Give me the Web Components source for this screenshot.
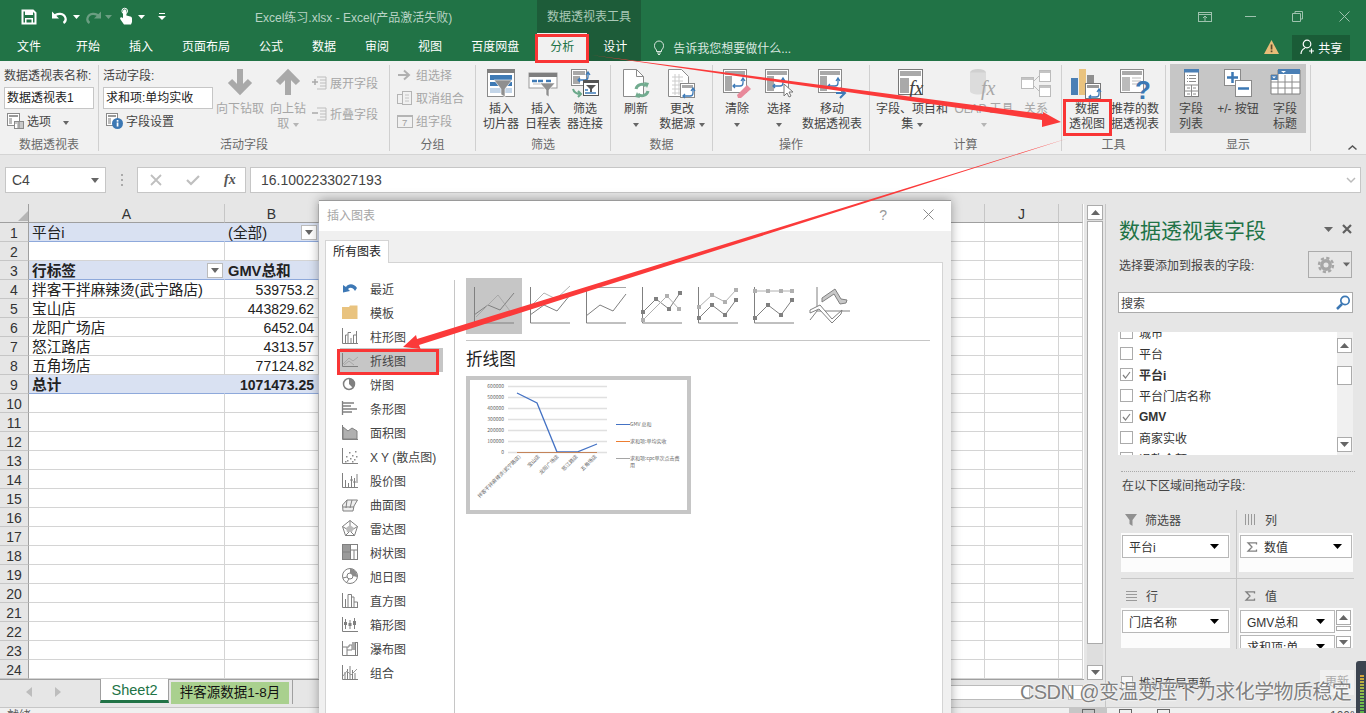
<!DOCTYPE html>
<html lang="zh"><head><meta charset="utf-8"><title>Excel</title>
<style>
html,body{margin:0;padding:0;background:#e6e6e6}
body{font:12px "Liberation Sans","Noto Sans CJK SC",sans-serif;color:#444;width:1366px;height:713px;overflow:hidden}
</style></head><body>
<x-app>
  <x-titlebar></x-titlebar>
  <x-ribbon>
    <x-group w="99" pad="4" label="数据透视表">
      <x-col style="width:94px">
        <x-small>数据透视表名称:</x-small>
        <x-input w="90">数据透视表1</x-input>
        <x-small ico="opts" style="padding-left:3px">选项<x-caret style="margin-left:12px"></x-caret></x-small>
      </x-col>
    </x-group>
    <x-group w="291" pad="4" label="活动字段">
      <x-col style="width:112px">
        <x-small>活动字段:</x-small>
        <x-input w="110">求和项:单均实收</x-input>
        <x-small ico="fset" style="padding-left:3px">字段设置</x-small>
      </x-col>
      <x-btn ico="down" w="50" dis>向下钻取</x-btn>
      <x-btn ico="up" w="46" dis>向上钻<br>取 <x-caret light></x-caret></x-btn>
      <x-col style="padding:8px 0 0 1px">
        <x-small ico="expand" dis>展开字段</x-small>
        <x-small ico="collapse" dis style="margin-top:8px">折叠字段</x-small>
      </x-col>
    </x-group>
    <x-group w="86" pad="7" label="分组">
      <x-col>
        <x-small ico="gsel" dis>组选择</x-small>
        <x-small ico="ungroup" dis>取消组合</x-small>
        <x-small ico="gfield" dis>组字段</x-small>
      </x-col>
    </x-group>
    <x-group w="135" pad="4" label="筛选">
      <x-btn ico="slicer" w="42">插入<br>切片器</x-btn>
      <x-btn ico="timeline" w="42">插入<br>日程表</x-btn>
      <x-btn ico="conn" w="42">筛选<br>器连接</x-btn>
    </x-group>
    <x-group w="102" pad="2" label="数据">
      <x-btn ico="refresh" w="46">刷新<br><x-caret></x-caret></x-btn>
      <x-btn ico="source" w="46" style="white-space:nowrap">更改<br>数据源 <x-caret></x-caret></x-btn>
    </x-group>
    <x-group w="157" pad="3" label="操作">
      <x-btn ico="clear" w="42">清除<br><x-caret></x-caret></x-btn>
      <x-btn ico="select" w="42">选择<br><x-caret></x-caret></x-btn>
      <x-btn ico="move" w="64">移动<br>数据透视表</x-btn>
    </x-group>
    <x-group w="192" pad="6" label="计算">
      <x-btn ico="field" w="72">字段、项目和<br>集 <x-caret></x-caret></x-btn>
      <x-btn ico="olap" w="72" dis>OLAP 工具<br><x-caret light></x-caret></x-btn>
      <x-btn ico="rel" w="32" dis>关系</x-btn>
    </x-group>
    <x-group w="104" pad="2" label="工具">
      <x-btn ico="pchart" w="46">数据<br>透视图</x-btn>
      <x-btn ico="recom" w="50">推荐的数<br>据透视表</x-btn>
    </x-group>
    <x-group w="145" pad="4" label="显示">
      <x-pressed>
        <x-btn ico="flist" w="42">字段<br>列表</x-btn>
        <x-btn ico="pm" w="52">+/- 按钮</x-btn>
        <x-btn ico="fhead" w="42">字段<br>标题</x-btn>
      </x-pressed>
    </x-group>
    <x-ico n="chev" style="margin:84px 0 0 37px"></x-ico>
  </x-ribbon>
  <x-formula></x-formula>
  <x-main>
    <x-sheet></x-sheet>
    <x-pane></x-pane>
  </x-main>
  <x-status></x-status>
  <x-dialog></x-dialog>
  <x-marks></x-marks>
  <x-meter></x-meter>
  <x-watermark>CSDN @变温变压下力求化学物质稳定</x-watermark>
</x-app>
<script>
const G='#8a8a8a',B='#3d7ab8',L='#a8a8a8';
const fr=(x,y,w,h,s=G)=>`<rect x="${x+.5}" y="${y+.5}" width="${w-1}" height="${h-1}" fill="#fff" stroke="${s}"/>`;
const pf=(x,y,w,h,s=L)=>fr(x,y,w,h,G)+`<rect x="${x+2}" y="${y+2}" width="${w-4}" height="4" fill="${s}"/><rect x="${x+2}" y="${y+7}" width="7" height="${h-9}" fill="${s}"/>`;
const swap=(x,y)=>`<path d="M${x} ${y+8}h7a3 3 0 0 0 3-3v-4M${x+8} ${y+3}l2-3 2 3M${x+2} ${y+6}l-2 2 2 2" fill="none" stroke="${B}" stroke-width="1.3"/>`;
const axes=(c='#808080')=>`<path d="M.5 0V36H40" fill="none" stroke="${c}"/>`;
const pl=(p,c,w=1)=>`<polyline points="${p}" fill="none" stroke="${c}" stroke-width="${w}"/>`;
const mk=(p,c)=>p.split(' ').map(q=>{const[a,b]=q.split(',');return `<rect x="${a-2}" y="${b-2}" width="4" height="4" fill="${c}"/>`}).join('');
const cl=(p,c)=>pl(p,c)+mk(p,c);
const S='#808080';
const ICONS={
 save:[16,16,'<path d="M1.5 1.5h10.5l2.5 2.5v10.5h-13z" fill="none" stroke="#fff" stroke-width="2"/><rect x="4" y="1" width="8" height="5" fill="#fff"/><rect x="4" y="9" width="8" height="5" fill="#fff"/><rect x="5.5" y="10.5" width="5" height="3" fill="#217346"/>'],
 undo:[16,14,'<path d="M3 6.5C6 2.5 13 3 14.5 8c.6 2-.5 4-2 5" fill="none" stroke="#fff" stroke-width="2.2"/><path d="M1 1.5v7h7z" fill="#fff"/>'],
 redo:[16,14,'<path d="M13 6.5C10 2.5 3 3 1.500 8c-.6 2 .5 4 2 5" fill="none" stroke="#6b9e82" stroke-width="2.2"/><path d="M15 1.500v7H8z" fill="#6b9e82"/>'],
 touch:[14,17,'<path d="M4 8V3a1.700 1.700 0 0 1 3.400 0v4.500l4 1c1 .3 1.600 1 1.600 2V14l-1 2.500H5L1.500 11.500 1 10c1-1 2-.8 3 .3z" fill="#fff"/><circle cx="5.700" cy="3" r="2.800" fill="none" stroke="#fff"/>'],
 ddw:[7,4,'<path d="M0 0h7L3.500 4z" fill="#fff"/>'],
 dddim:[7,4,'<path d="M0 0h7L3.500 4z" fill="#6b9e82"/>'],
 cust:[8,8,'<path d="M1 0h6v1H1zM0 3h8L4 7z" fill="#fff"/>'],
 wdisp:[14,10,'<rect x=".5" y=".5" width="13" height="9" fill="none" stroke="#9ec2ae"/><path d="M0 2.500h14M7 9V4M5 6l2-2 2 2" fill="none" stroke="#9ec2ae"/>'],
 wmin:[11,1,'<rect width="11" height="1" fill="#9ec2ae"/>'],
 wres:[11,11,'<path d="M3 2.500V.5h7.500V8H8.500M.5 2.500h8v8h-8z" fill="none" stroke="#9ec2ae"/>'],
 wx:[11,11,'<path d="M.5.5l10 10M10.500.5l-10 10" stroke="#9ec2ae"/>'],
 wxd:[11,11,'<path d="M.5.5l10 10M10.500.5l-10 10" stroke="#8a8a8a"/>'],
 bulb:[10,15,'<path d="M2.500 10C1 8.500.5 7.500.5 5.500a4.500 4.500 0 0 1 9 0c0 2-.5 3-2 4.500v1.500h-5zM3 13h4M4 14.500h2" fill="none" stroke="#dbe8e0"/>'],
 warn:[15,14,'<path d="M7.500 0L15 14H0z" fill="#e8bd78"/><rect x="6.700" y="4.500" width="1.700" height="5" fill="#5a4a2c"/><rect x="6.700" y="10.500" width="1.700" height="1.700" fill="#5a4a2c"/>'],
 share:[14,16,'<circle cx="7" cy="5" r="3.800" fill="none" stroke="#fff" stroke-width="1.200"/><path d="M1 15c0-3 2-5 4-6M9 12h5M11.500 9.500v5" fill="none" stroke="#fff" stroke-width="1.200"/>'],
 opts:[17,16,`${fr(0,0,13,13)}<rect x="2" y="2" width="9" height="2" fill="#999"/><rect x="2" y="5" width="3" height="6" fill="#bbb"/>${fr(7,8,10,8)}<path d="M8 10h8M10 12h6M10 14h6M12 9v6" stroke="#777" stroke-width=".8"/>`],
 fset:[17,16,`${fr(0,0,12,13)}<rect x="2" y="2" width="8" height="2" fill="#999"/><rect x="2" y="5" width="3" height="6" fill="#bbb"/><circle cx="11.500" cy="10.500" r="5.500" fill="#3c78b4"/><rect x="10.700" y="9.500" width="1.700" height="4" fill="#fff"/><rect x="10.700" y="7" width="1.700" height="1.700" fill="#fff"/>`],
 down:[24,26,'<path d="M12 0V22M2 12L12 22L22 12" fill="none" stroke="#a9a9a9" stroke-width="6"/>'],
 up:[24,26,'<path d="M12 26V4M2 14L12 4L22 14" fill="none" stroke="#a9a9a9" stroke-width="6"/>'],
 expand:[15,14,'<path d="M0 6h6M3 3v6" stroke="#a9a9a9" stroke-width="1.500" fill="none"/><path d="M5 1h9M8 4h6M8 7h6M8 10h6M5 13h9" stroke="#bdbdbd" fill="none"/><path d="M14 1v12" stroke="#bdbdbd"/>'],
 collapse:[15,14,'<path d="M0 6h6" stroke="#a9a9a9" stroke-width="1.500" fill="none"/><path d="M5 1h9M8 4h6M8 7h6M8 10h6M5 13h9" stroke="#bdbdbd" fill="none"/><path d="M14 1v12" stroke="#bdbdbd"/>'],
 gsel:[16,12,'<path d="M1 6h11M7 1.500L12 6l-5 4.500" fill="none" stroke="#b0b0b0" stroke-width="2"/>'],
 ungroup:[16,14,'<rect x=".5" y="3.500" width="5" height="9" fill="none" stroke="#b4b4b4"/><rect x="5.500" y=".5" width="9" height="13" fill="none" stroke="#b4b4b4"/><path d="M8 4h4M8 7h4M8 10h4" stroke="#c4c4c4"/>'],
 gfield:[16,15,'<rect x=".5" y="2.500" width="15" height="12" fill="none" stroke="#b4b4b4"/><path d="M0 3h16" stroke="#b4b4b4" stroke-width="2"/><text x="5" y="13" font-size="9.500" fill="#a0a0a0" font-family="Liberation Sans">7</text>'],
 slicer:[28,28,`${fr(0,0,28,28)}<rect width="28" height="4" fill="#7f7f7f"/><rect x="3" y="6" width="22" height="5" fill="#3e7ab5"/><rect x="3" y="13" width="22" height="4" fill="#3e7ab5"/><rect x="3" y="19" width="22" height="5" fill="#c3d5e8"/><path d="M7 11h18l-7 9v8l-4-2.500V20z" fill="#8f8f8f" stroke="#fff" stroke-width=".6"/>`],
 timeline:[28,28,`<rect y="4" width="28" height="15" fill="#fff" stroke="#999"/><rect y="4" width="28" height="4" fill="#7f7f7f"/><path d="M3 12h5M9 12h5M17 12h5" stroke="#3e7ab5" stroke-width="2.500"/><path d="M4 15h20" stroke="#bbb"/><path d="M11 14h15l-6 7v7l-3-2v-5z" fill="#8f8f8f" stroke="#fff" stroke-width=".6"/>`],
 conn:[28,28,`${pf(0,0,16,17)}${swap(7,3)}<path d="M2 20c1 4 4 5 8 5M7 22l3 3-3 3" fill="none" stroke="#6aa88a" stroke-width="2"/>${fr(12,11,16,16,'#555')}<rect x="12" y="11" width="16" height="3" fill="#555"/><path d="M15 16h10l-4 4v3h-2v-3z" fill="#555"/><path d="M14 21h3M14 24h11" stroke="#3e7ab5" stroke-width="1.500"/>`],
 refresh:[28,30,`<path d="M1.500.5h13l7 7v20h-20z" fill="#fff" stroke="${G}"/><path d="M14.500.5v7h7" fill="none" stroke="${G}"/><path d="M14 20a6 6 0 0 1 10-3M26 22a6 6 0 0 1-10 3" fill="none" stroke="#72ab8f" stroke-width="3"/><path d="M22 13l5 1-2 5zM18 29l-5-1 2-5z" fill="#72ab8f"/>`],
 source:[28,30,`<path d="M.5.5h13l7 7v20H.5z" fill="#fff" stroke="${G}"/><path d="M4 8h11M4 12h11M4 16h11M4 20h11M4 24h11M7 5v21M11 5v21" stroke="#ccc"/>${fr(12,14,15,15)}<rect x="14" y="16" width="11" height="3" fill="${L}"/>${swap(15,19)}`],
 clear:[28,30,`${pf(0,0,24,24)}${swap(10,9)}<path d="M14 26l10-10 4 4-10 9h-3z" fill="#e8899a"/>`],
 select:[28,30,`${pf(0,0,24,24)}${swap(8,9)}<path d="M19 15v12l3-3 2 4 2-1-2-4h4z" fill="#fff" stroke="#777"/>`],
 move:[28,30,`${pf(0,0,24,24)}${swap(10,9)}<path d="M18 24h8M22 19l5 5-5 5" fill="none" stroke="${B}" stroke-width="2"/>`],
 field:[28,30,`${fr(0,0,25,26,'#777')}<rect x="2" y="2" width="21" height="5" fill="#a9a9a9"/><rect x="2" y="9" width="9" height="15" fill="#a9a9a9"/><text x="11" y="26" font-size="20" font-style="italic" font-family="Liberation Serif" fill="#444">fx</text>`],
 olap:[30,30,`<ellipse cx="9" cy="3.500" rx="8" ry="3.500" fill="#d0d0d0"/><path d="M1 3.500V22c0 2 4 3.500 8 3.500s8-1.500 8-3.500V3.500z" fill="#dcdcdc"/><text x="12" y="26" font-size="20" font-style="italic" font-family="Liberation Serif" fill="#a8a8a8">fx</text>`],
 rel:[30,28,`<g fill="#fff" stroke="#bbb"><rect x=".5" y="8.500" width="12" height="11"/><rect x="18.500" y="1.500" width="11" height="11"/><rect x="18.500" y="16.500" width="11" height="11"/></g><rect x="1" y="9" width="11" height="2" fill="#c4c4c4"/><rect x="19" y="2" width="10" height="2" fill="#c4c4c4"/><rect x="19" y="17" width="10" height="2" fill="#c4c4c4"/><path d="M18 7l-5 5M18 22l-5-5" stroke="#bbb"/>`],
 pchart:[32,30,`<rect y="9" width="7" height="17" fill="#4a7fb5"/><rect x="8" y="0" width="7" height="26" fill="#e9c37f"/><rect x="16" y="6" width="7" height="12" fill="#8f8f8f"/>${fr(14,14,16,16,'#777')}<rect x="16" y="16" width="12" height="3" fill="#999"/>${swap(18,20)}`],
 recom:[30,30,`${fr(0,0,24,24)}<rect x="2" y="2" width="20" height="4" fill="#aaa"/><rect x="2" y="8" width="8" height="14" fill="#bbb"/><path d="M12 9h9M12 12h9M12 15h6" stroke="#bbb"/><text x="15" y="30" font-size="26" font-weight="bold" fill="#3c78b4" font-family="Liberation Sans">?</text>`],
 flist:[15,28,`<rect x=".5" y=".5" width="14" height="27" fill="#fff" stroke="#7f7f7f"/><rect width="15" height="3.500" fill="#4a7fb5"/><path d="M3 6.500h1M5 6.500h7M3 9.500h1M5 9.500h7M3 12.500h1M5 12.500h7M0 16h15M3 19h3M9 19h3M0 22h15M3 25h3M9 25h3M7.500 16v12" stroke="#8a8a8a"/>`],
 pm:[28,28,`${fr(0,0,17,17)}<path d="M8.500 3v11M3 8.500h11" stroke="#3c78b4" stroke-width="2.500"/>${fr(11,11,17,17)}<path d="M14 19.500h11" stroke="#3c78b4" stroke-width="2.500"/>`],
 fhead:[29,26,`<path d="M7 6V1h22v24H0V6z" fill="#fff" stroke="#7f7f7f"/><rect x="7" y="0" width="22" height="5" fill="#4a7fb5"/><rect x="0" y="6" width="7" height="5" fill="#4a7fb5"/><path d="M10 2h5l-2.500 2zM1 7.500h4L3 9.500z" fill="#fff"/><path d="M0 13h29M0 19h29M7 6v19M14 6v19M21 6v19" stroke="#8a8a8a"/>`],
 chev:[9,5,'<path d="M.5 4.500L4.500 1l4 3.500" fill="none" stroke="#555" stroke-width="1.500"/>'],
 recent:[16,12,`<path d="M4 5C6 1.500 12 1 15 6l-2 3C11 5.500 8 5 6 7l2 2-7 1.500L1 3z" fill="#3d78b5"/>`],
 folder:[16,14,'<path d="M0 2h7l1-1.500h7.500V14H0z" fill="#e9c37f"/>'],
 col:[16,16,`<path d="M.5 0v15.500H16M3.500 7v8M6 4.500V15M9 10v5M11.500 7v8M14.500 3v12" fill="none" stroke="${S}"/><path d="M6 4.500h3M3.500 7h2M11.500 7h3" stroke="${S}"/>`],
 line:[16,14,`<path d="M.5 0v13.500H16" fill="none" stroke="${S}"/><path d="M1 11l6-6 4 3 5-4M2 12l5-4 5 4" fill="none" stroke="${L}"/>`],
 pie:[14,14,`<circle cx="7" cy="7" r="5.500" fill="#fff" stroke="${S}" stroke-width="1.500"/><path d="M7 7V1.500a5.500 5.500 0 0 1 4 9.500z" fill="${S}"/>`],
 bar:[16,14,`<path d="M.5 0v14M1 2h11M1 5h8M1 8h14M1 11h9" fill="none" stroke="${S}" stroke-width="1.300"/>`],
 area:[16,15,`<path d="M.5 0v14.500H16" fill="none" stroke="${S}"/><path d="M1 2l5 4 4-3 5 3v8H1z" fill="#b0b0b0" stroke="${S}"/>`],
 scat:[16,16,`<path d="M.5 0v15.500H16" fill="none" stroke="${S}"/><g fill="#8c8c8c">${[[4,8],[7,4],[10,7],[13,3],[5,12],[8,10],[12,11],[14,8],[3,13],[10,13]].map(p=>`<rect x="${p[0]}" y="${p[1]}" width="1.500" height="1.500"/>`).join('')}</g>`],
 stock:[16,15,`<path d="M.5 0v14.500H16M3.500 7v8M6.500 10v5M9.500 3v12M12.500 5v10M15 1v9" fill="none" stroke="${S}"/><path d="M8 7h3M11 9h3" stroke="${S}"/>`],
 surf:[16,15,`<path d="M.5 8L5 3h10.500L12 9l-1 5H1zM1 10l11 0M5 3l-1 8M10 3l-2 8" fill="#eee" stroke="${S}"/>`],
 radar:[16,16,`<path d="M8 .5l7.500 6-3 9h-9l-3-9zM8 .5V11M.5 6.500L8 11l7.500-4.500M3.500 15.500L8 11l4.500 4.500" fill="none" stroke="${S}"/><path d="M8 5L12 8 10 12 5 12 4 8z" fill="#bbb"/>`],
 tree:[16,16,`<rect x=".5" y=".5" width="15" height="15" fill="#fff" stroke="${S}"/><rect x="1" y="1" width="7" height="7" fill="#9a9a9a"/><rect x="1" y="8" width="7" height="7" fill="#9a9a9a"/><path d="M8.500 0v16M8 6h8M12 6v10M1 8h7" stroke="${S}"/>`],
 sun:[16,16,`<circle cx="8" cy="8" r="7.500" fill="#fff" stroke="${S}"/><circle cx="8" cy="8" r="3" fill="none" stroke="${S}"/><path d="M8 .5a7.500 7.500 0 0 1 7 8.500L11 8 8 5z" fill="#8c8c8c"/><path d="M1 10l4-1M5 14l2-3" stroke="${S}"/>`],
 hist:[16,15,`<path d="M.5 0v14.500H16M3.500 6v9M6 1.500V15M6 1.500h3.500V15M9.500 4H12v11M12 9h3.500v6" fill="none" stroke="${S}"/>`],
 boxp:[16,15,`<path d="M.5 0v14.500H16M3.500 2v10M8 3v9M12.500 1v11" fill="none" stroke="${S}"/><rect x="2" y="5" width="3" height="3" fill="${S}"/><rect x="6.500" y="6" width="3" height="3" fill="${S}"/><rect x="11" y="4" width="3" height="4" fill="${S}"/>`],
 water:[16,15,`<path d="M.5 0v14.500H16M1 6h4v8M5 6h2v-2h3v5H5" fill="none" stroke="${S}"/><rect x="10" y="1" width="3" height="8" fill="#aaa"/><rect x="13.500" y="1.500" width="2" height="13" fill="none" stroke="${S}"/>`],
 combo:[16,15,`<path d="M.5 0v14.500H16M3 7v8M5.500 4v11M8 1v14M10.500 5v10M13 8v7" fill="none" stroke="${S}"/><path d="M1 11l4-5 4 4 6-6" fill="none" stroke="#9a9a9a"/>`],
 t1:[40,36,axes()+pl('0,28 14,18 26,23 40,6','#808080')+pl('2,30 24,8 39,28','#a8a8a8')],
 t2:[40,36,axes()+pl('0,28 14,18 27,24 40,8','#808080')+pl('0,20 14,6 26,12 40,-1','#b4b4b4')],
 t3:[40,36,axes()+'<path d="M0 .5h40" stroke="#a8a8a8"/>'+pl('0,29 14,18 27,24 40,7','#808080')],
 t4:[40,36,axes()+cl('1,25 14,12 27,22 38,6','#808080')+cl('1,33 25,9 37,22','#b0b0b0')],
 t5:[40,36,axes()+cl('1,31 14,18 27,28 38,13','#808080')+cl('1,20 14,8 27,15 38,3','#b0b0b0')],
 t6:[40,36,axes()+pl('1,4 38,4','#b0b0b0')+mk('1,4 14,4 27,4 38,4','#b0b0b0')+cl('1,31 14,18 27,28 38,13','#808080')],
 t7:[40,36,`<path d="M7 0v24h33M0 33l7-9" fill="none" stroke="#808080"/><path d="M12 11l13-9 6 10 6 1-1 3-6 1-6-10-12 8z" fill="#c8c8c8" stroke="#808080"/><path d="M0 23l10-5 12 14 10-9-1 4-9 9-13-14-9 4z" fill="#fff" stroke="#808080"/>`],
 dn:[9,5,'<path d="M0 0h9L4.500 5z" fill="#666"/>'],
 xbold:[10,10,'<path d="M1 1l8 8M9 1l-8 8" stroke="#5f5f5f" stroke-width="2.200"/>'],
 gear:[18,18,'<circle cx="9" cy="9" r="4.200" fill="none" stroke="#a6a6a6" stroke-width="3.400"/><circle cx="9" cy="9" r="7" fill="none" stroke="#a6a6a6" stroke-width="2.400" stroke-dasharray="3.200 2.300"/>'],
 mag:[14,15,'<circle cx="9" cy="5.500" r="4.200" fill="none" stroke="#3c78b4" stroke-width="1.700"/><path d="M1 14l5-5" stroke="#3c78b4" stroke-width="2.500"/>'],
 funnel:[12,12,'<path d="M0 0h12L7.500 6v6l-3-2V6z" fill="#909090"/>'],
 cols:[10,11,'<path d="M.5 0v11M3.500 0v11M6.500 0v11M9.500 0v11" stroke="#9a9a9a"/>'],
 rows:[11,10,'<path d="M0 .5h11M0 3.500h11M0 6.500h11M0 9.500h11" stroke="#9a9a9a"/>'],
 sum:[10,10,'<path d="M9.500 2.500V.8H1L5 5 1 9.200h8.500V7.500" fill="none" stroke="#808080" stroke-width="1.300"/>'],
 blk:[9,5,'<path d="M0 0h9L4.500 5z" fill="#000"/>'],
 up2:[9,5,'<path d="M0 5h9L4.500 0z" fill="#666"/>'],
 tri:[8,5,'<path d="M0 0h8L4 5z" fill="#666"/>'],
 nl:[6,10,'<path d="M6 0v10L0 5z" fill="#bdbdbd"/>'],
 nr:[6,10,'<path d="M0 0v10l6-5z" fill="#bdbdbd"/>'],
 fx1:[12,12,'<path d="M1 1l10 10M11 1L1 11" stroke="#bfbfbf" stroke-width="1.800"/>'],
 fx2:[14,11,'<path d="M1 5l4 4 8-8" fill="none" stroke="#bfbfbf" stroke-width="2.200"/>'],
 vdots:[2,12,'<path d="M1 0v2M1 5v2M1 10v2" stroke="#aaa" stroke-width="2"/>'],
 corner:[10,10,'<path d="M10 0v10H0z" fill="#b5b5b5"/>'],
 chevd:[10,6,'<path d="M1 1l4 4 4-4" fill="none" stroke="#bbb" stroke-width="1.500"/>'],
 checkmark:[9,8,'<path d="M1 4l2.500 3L8 1" fill="none" stroke="#808080" stroke-width="1.200"/>'],
};
function def(tag,css,html){
  customElements.define(tag,class extends HTMLElement{
    connectedCallback(){
      if(this.shadowRoot)return;
      const r=this.attachShadow({mode:'open'});
      r.innerHTML=`<style>${css}</style>`+(typeof html==='function'?html(this):html);
    }
  });
}
const ic=(n,st='')=>`<x-ico n="${n}" style="${st}"></x-ico>`;
def('x-ico',':host{display:inline-block;line-height:0;flex:none}svg{display:block;overflow:visible}',e=>{
  const[w,h,s]=ICONS[e.getAttribute('n')];
  return `<svg xmlns="http://www.w3.org/2000/svg" width="${w}" height="${h}" viewBox="0 0 ${w} ${h}">${s}</svg>`;
});
def('x-caret',`:host{display:inline-block;width:0;height:0;border:3px solid transparent;border-top:4px solid #666;border-bottom:0;vertical-align:middle}:host([light]){border-top-color:#b5b5b5}`,'');
def('x-app',':host{display:flex;flex-direction:column;position:relative;width:1366px;height:713px;overflow:hidden}','<slot></slot>');
def('x-main',':host{display:flex;height:503px;flex:none}','<slot></slot>');
def('x-titlebar',`
:host{display:block;height:61px;background:#217346;color:#fff;flex:none;font-size:12px}
.top{display:flex;height:33px;align-items:center}
.qat{display:flex;align-items:center;width:255px;box-sizing:border-box;padding-left:21px;height:33px}
.title{width:282px;color:#b9d3c5;font-size:12px;white-space:nowrap}
.ctx{width:104px;height:33px;background:#1d5c39;color:#a9c8b6;text-align:center;line-height:34px}
.win{display:flex;align-items:center;margin-left:557px}
.tabs{display:flex;height:28px;align-items:center}
.t{padding:0 14.500px;line-height:28px;color:#fff;white-space:nowrap}
.f{padding:0 20.500px 0 17px}
.ct{margin-left:3.500px;display:flex;height:28px;background:#1d5c39;width:104px}
.a{background:#f1f1f1;color:#217346;padding:0 13px;width:24px}
.d{padding:0 14px 0 16px}
.tell{display:flex;align-items:center;margin-left:13px;color:#dbe8e0;gap:9px;width:136px;white-space:nowrap}
.sh{margin-left:13px;display:flex;align-items:center;gap:4px;background:#1a5c37;width:58px;height:25px;box-sizing:border-box;padding-left:8px;color:#fff}
`,`<div class="top"><div class="qat">${ic('save')}${ic('undo','margin-left:14px')}${ic('ddw','margin-left:6px')}${ic('redo','margin-left:6px')}${ic('dddim','margin-left:3px')}${ic('touch','margin-left:7px')}${ic('ddw','margin-left:5px')}${ic('cust','margin-left:13px')}</div>
<div class="title">Excel练习.xlsx - Excel(产品激活失败)</div><div class="ctx">数据透视表工具</div>
<div class="win">${ic('wdisp')}${ic('wmin','margin-left:33px')}${ic('wres','margin-left:36px')}${ic('wx','margin-left:36px')}</div></div>
<div class="tabs"><span class="t f">文件</span><span class="t">开始</span><span class="t">插入</span><span class="t">页面布局</span><span class="t">公式</span><span class="t">数据</span><span class="t">审阅</span><span class="t">视图</span><span class="t">百度网盘</span>
<div class="ct"><span class="t a">分析</span><span class="t d">设计</span></div>
<div class="tell">${ic('bulb')}<span>告诉我您想要做什么...</span></div>
${ic('warn','margin-left:474px')}
<div class="sh">${ic('share')}<span>共享</span></div></div>`);
def('x-ribbon',':host{display:flex;height:94px;background:#f1f1f1;flex:none;box-shadow:inset 0 -1px #d4d4d4}','<slot></slot>');
def('x-group',`:host{display:flex;flex:none;box-sizing:border-box;height:94px}
.m{flex:1;display:flex;flex-direction:column;min-width:0}.c{height:72px;margin-top:3px;display:flex;align-items:flex-start}
.l{height:16px;line-height:16px;text-align:center;color:#6a6a6a;margin-top:1px}.s{width:1px;background:#d0d0d0;margin:4px 0 4px}`,
e=>`<style>:host{width:${e.getAttribute('w')}px}.c{padding-left:${e.getAttribute('pad')}px}</style><div class="m"><div class="c"><slot></slot></div><div class="l">${e.getAttribute('label')}</div></div><div class="s"></div>`);
def('x-col',':host{display:flex;flex-direction:column;flex:none}','<slot></slot>');
def('x-pressed',':host{display:flex;background:#c6c6c6;height:69px;flex:none}','<slot></slot>');
def('x-small',`:host{display:flex;align-items:center;height:23px;box-sizing:border-box;padding-bottom:2px;white-space:nowrap;flex:none;gap:3px}:host([dis]){color:#a6a6a6}`,
e=>`${e.hasAttribute('ico')?ic(e.getAttribute('ico')):''}<span><slot></slot></span>`);
def('x-input',`:host{display:block;height:22px;background:#fff;border:1px solid #c6c6c6;box-sizing:border-box;line-height:21px;padding-left:2px;color:#222;white-space:nowrap;overflow:hidden;margin-bottom:1px}`,
e=>`<style>:host{width:${e.getAttribute('w')}px}</style><slot></slot>`);
def('x-btn',`:host{display:flex;flex-direction:column;align-items:center;flex:none;height:69px;box-sizing:border-box;padding-top:5px;text-align:center;line-height:15px;white-space:nowrap}
:host([dis]){color:#a6a6a6}.i{height:28px;display:flex;align-items:flex-end;margin-bottom:5px;justify-content:center}`,
e=>`<style>:host{width:${e.getAttribute('w')}px}</style><div class="i">${ic(e.getAttribute('ico'),'height:28px')}</div><div><slot></slot></div>`);
def('x-formula',`:host{display:flex;align-items:flex-start;height:49px;background:#e6e6e6;box-sizing:border-box;padding:12px 5px 0;flex:none;position:relative}
.b{background:#fff;border:1px solid #c6c6c6;height:26px;box-sizing:border-box;display:flex;align-items:center;color:#444;font-size:14px}
.n{width:101px;padding:0 6px 0 6px;justify-content:space-between}
.fx{width:109px;margin-left:14px;padding-left:12px;gap:0}
.i{margin-left:4px;width:1111px;padding:0 4px 0 10px;justify-content:space-between}
.f{font:italic bold 14px "Liberation Serif";color:#555;margin-left:24px}`,
`<div class="b n"><span>C4</span>${ic('tri')}</div>${ic('vdots','margin:7px 0 0 15px')}<div class="b fx">${ic('fx1')}<x-ico n="fx2" style="margin-left:24px"></x-ico><span class="f">fx</span></div><div class="b i"><span>16.1002233027193</span>${ic('chevd')}</div>`);
(function(){
 const cols=['A','B','C','D','E','F','G','H','I','J','K'];
 const w=[196,94,95,95,95,95,95,95,96,74,24];
 const data={1:{A:'平台i',B:'(全部)',fill:1,btnB:1},3:{A:'行标签',B:'GMV总和',fill:1,bold:1,btnA:1},
  4:{A:'拌客干拌麻辣烫(武宁路店)',B:'539753.2',r:1},5:{A:'宝山店',B:'443829.62',r:1},6:{A:'龙阳广场店',B:'6452.04',r:1},7:{A:'怒江路店',B:'4313.57',r:1},8:{A:'五角场店',B:'77124.82',r:1},9:{A:'总计',B:'1071473.25',r:1,fill:1,bold:1}};
 let h=`<div class="ch cn">${ic('corner','margin:7px 0 0 18px')}</div>`+cols.map(c=>`<div class="ch">${c==='K'?'':c}</div>`).join('');
 for(let i=1;i<=24;i++){
  const d=data[i]||{};
  h+=`<div class="rh">${i}</div>`;
  cols.forEach(c=>{
   let cl='c'+(d.fill&&(c==='A'||c==='B')?' p':'')+(d.bold&&(c==='A'||c==='B')?' bd':'');
   let t='';
   if(c==='A'&&d.A){t=`<span class="tx">${d.A}</span>`+(d.btnA?'<x-fbtn></x-fbtn>':'');}
   if(c==='B'&&d.B){t=`<span class="tx ${d.r?'num':''}">${d.B}</span>`+(d.btnB?'<x-fbtn></x-fbtn>':''); if(d.r)cl+=' rt';}
   h+=`<div class="${cl}">${t}</div>`;
  });
 }
 def('x-fbtn',':host{display:flex;align-items:center;justify-content:center;width:16px;height:15px;background:#fff;border:1px solid #bbb;box-sizing:border-box;flex:none}',ic('tri'));
 def('x-sheet',`:host{display:flex;width:1105px;height:503px;position:relative;flex:none;background:#e6e6e6}
.l{width:1084px;flex:none;display:flex;flex-direction:column}
.g{display:grid;grid-template-columns:29px ${w.map(x=>x+'px').join(' ')};grid-auto-rows:19px;width:1084px;overflow:hidden;height:475px;background:#fff;font-size:14.670px;color:#222}
.ch,.rh{background:#e6e6e6;box-sizing:border-box;color:#333;font-size:14px;text-align:center;line-height:20px}
.ch{border-right:1px solid #c6c6c6;border-bottom:1px solid #9f9f9f}
.cn{border-right:1px solid #9f9f9f}
.rh{border-right:1px solid #9f9f9f;border-bottom:1px solid #c6c6c6}
.c{border-right:1px solid #d4d4d4;border-bottom:1px solid #d4d4d4;box-sizing:border-box;display:flex;align-items:center;justify-content:space-between;padding:0 1px 0 3px;white-space:nowrap;overflow:hidden;line-height:18px}
.tx{position:relative;top:1px}
.p{background:#d9e1f2;border-right-color:#d9e1f2;border-bottom-color:#8ea9db}
.bd{font-weight:700}.rt{justify-content:flex-end;padding-right:4px}.num{font-size:14px}
.tabs{display:flex;height:28px;align-items:flex-start;background:#e6e6e6;position:relative}
.nav{width:100px;height:25px;display:flex;align-items:center;box-sizing:border-box;padding-left:26px;gap:23px;border-top:1px solid #9f9f9f}
.tb{height:24px;box-sizing:border-box;text-align:center;white-space:nowrap}
.s1{width:69px;background:#fff;color:#217346;font-size:14.500px;line-height:22px;border-bottom:3px solid #217346;border-left:1px solid #9f9f9f;border-right:1px solid #9f9f9f}
.s2{width:124px;background:#e6e6e6;border-top:1px solid #9f9f9f;padding:2px 3px 0 2px;height:25px;border-right:1px solid #9f9f9f}
.s2 div{background:#a9d08e;height:22px;color:#111;line-height:21px;font-size:13.500px;width:118px}
.hs{flex:1;border-top:1px solid #9f9f9f;height:25px;box-sizing:border-box;padding-top:5px;display:flex}
.th{width:629px;margin-left:108px;height:15px;background:#fff;border:1px solid #bbb;box-sizing:border-box;flex:none}
.rb{width:15px;height:15px;margin-left:38px;background:#fff;border:1px solid #bbb;box-sizing:border-box;flex:none}
.v{width:16px;margin-left:3px;height:475px;margin-top:1px;display:flex;flex-direction:column;box-sizing:border-box;background:#dedede}
.bt{height:15px;background:#fff;border:1px solid #ababab;box-sizing:border-box;display:flex;align-items:center;justify-content:center;flex:none}
.tm{height:423px;background:#fff;border:1px solid #ababab;box-sizing:border-box;margin-top:1px}
.sp{flex:1}`,
 `<div class="l"><div class="g">${h}</div><div class="tabs"><div class="nav">${ic('nl')}${ic('nr')}</div><div class="tb s1">Sheet2</div><div class="tb s2"><div>拌客源数据1-8月</div></div><div class="hs"><div class="th"></div><div class="rb"></div></div></div></div>
 <div class="v"><div class="bt">${ic('up2')}</div><div class="tm"></div><div class="sp"></div><div class="bt">${ic('dn')}</div></div>`);
})();
def('x-check',`:host{display:flex;align-items:center;height:21px;white-space:nowrap;color:#333;padding-left:2px}
.b{width:13px;height:13px;background:#fff;border:1px solid #ababab;box-sizing:border-box;margin-right:6px;display:flex;align-items:center;justify-content:center;flex:none}
:host([bold]){font-weight:700}`,e=>`<div class="b">${e.hasAttribute('on')?ic('checkmark'):''}</div><slot></slot>`);
def('x-drop',`:host{display:flex;align-items:center;justify-content:space-between;height:23px;background:#fff;border:1px solid #b8b8b8;box-sizing:border-box;padding:0 9px 0 6px;margin:2px 1px 0;white-space:nowrap;color:#333;overflow:hidden}
span{display:flex;align-items:center;gap:7px}`,e=>`<span>${e.hasAttribute('sum')?ic('sum'):''}<slot></slot></span>${ic('blk')}`);
def('x-pane',`:host{display:block;width:261px;height:503px;box-sizing:border-box;border-left:1px solid #c6c6c6;background:#e6e6e6;flex:none;padding:10px 14px 0 12px;color:#444;position:relative;overflow:hidden}
.t{display:flex;align-items:center;height:30px;justify-content:space-between}
.t b{font-weight:400;font-size:21px;color:#217346;margin-left:1px;white-space:nowrap}
.tc{display:flex;align-items:center;gap:9px}
.s{display:flex;align-items:center;justify-content:space-between;height:27px;margin-top:7px;padding-left:1px;white-space:nowrap}
.gb{width:44px;height:27px;border:1px solid #ababab;box-sizing:border-box;display:flex;align-items:center;padding-left:8px;gap:7px}
.q{height:21px;margin-top:14px;background:#fff;border:1px solid #ababab;box-sizing:border-box;display:flex;justify-content:space-between;align-items:center;padding:0 2px;width:235px;color:#444}
.ls{display:flex;margin-top:19px;height:123px;width:235px;background:#fff;overflow:hidden}
.li{flex:1;margin-top:-10px}
.sb{width:16px;background:#f0f0f0;display:flex;flex-direction:column;padding-top:6px;box-sizing:border-box}
.b1{height:15px;background:#fff;border:1px solid #ababab;box-sizing:border-box;display:flex;align-items:center;justify-content:center;flex:none;width:15px}
.tm{height:19px;margin-top:13px;background:#fff;border:1px solid #ababab;box-sizing:border-box;width:15px}
.dot{border-top:1px dotted #aaa;margin-top:16px;margin-left:3px;width:234px;height:0}
.h{height:16px;line-height:16px;margin:6px 0 0 4px;color:#444;white-space:nowrap}
.ar{display:grid;grid-template-columns:115px 1px 117px;grid-template-rows:68px 1px 70px;margin:16px 0 0 3px;width:233px}
.ah{height:23px;display:flex;align-items:center;padding:0 0 4px 4px;gap:7px;box-sizing:border-box}
.ah span{margin-left:1px}
.wb{background:#fcfcfc;width:109px;height:39px;box-sizing:border-box;overflow:hidden}
.wb2{width:114px;margin-left:2px}
.vr{background:#c6c6c6;grid-row:1/4;grid-column:2}
.hr{background:#c6c6c6;grid-row:2;grid-column:1/4}
.hd2{margin-top:6px;padding-bottom:2px}
.vals{display:flex}
.vc{flex:1;min-width:0}
.vs{width:17px;display:flex;flex-direction:column;padding-top:2px;box-sizing:border-box;gap:1px}
.bot{display:flex;align-items:center;justify-content:space-between;height:25px;margin-top:21px;margin-left:3px;width:233px}
.ck{display:flex;align-items:center;gap:6px;white-space:nowrap}
.ck i{width:12px;height:13px;border:1px solid #ababab;background:#f8f8f8;display:block;box-sizing:border-box}
.up{width:34px;height:25px;background:#f0f0f0;text-align:center;line-height:25px;color:#aaa}`,
`<div class="t"><b>数据透视表字段</b><div class="tc">${ic('dn')}${ic('xbold')}</div></div>
<div class="s"><span>选择要添加到报表的字段:</span><div class="gb">${ic('gear')}${ic('dn','transform:scale(.8)')}</div></div>
<div class="q"><span>搜索</span>${ic('mag')}</div>
<div class="ls"><div class="li"><x-check>城市</x-check><x-check>平台</x-check><x-check on bold>平台i</x-check><x-check>平台门店名称</x-check><x-check on bold>GMV</x-check><x-check>商家实收</x-check><x-check>退款金额</x-check></div>
<div class="sb"><div class="b1">${ic('up2')}</div><div class="tm"></div><div style="flex:1"></div><div class="b1" style="margin-bottom:3px">${ic('dn')}</div></div></div>
<div class="dot"></div><div class="h">在以下区域间拖动字段:</div>
<div class="ar">
 <div><div class="ah">${ic('funnel')}<span>筛选器</span></div><div class="wb"><x-drop>平台i</x-drop></div></div>
 <div class="vr"></div>
 <div><div class="ah" style="padding-left:8px;gap:9px">${ic('cols')}<span>列</span></div><div class="wb wb2"><x-drop sum>数值</x-drop></div></div>
 <div class="hr"></div>
 <div><div class="ah hd2" style="padding-left:5px;gap:8px">${ic('rows')}<span>行</span></div><div class="wb" style="height:40px"><x-drop>门店名称</x-drop></div></div>
 <div><div class="ah hd2" style="padding-left:8px;gap:9px">${ic('sum')}<span>值</span></div><div class="wb wb2 vals" style="height:40px"><div class="vc"><x-drop>GMV总和</x-drop><x-drop>求和项:单</x-drop></div><div class="vs"><div class="b1">${ic('up2')}</div><div class="b1" style="height:5px"></div><div class="b1" style="margin-top:4px;height:12px">${ic('dn')}</div></div></div></div>
</div>
<div class="bot"><div class="ck"><i></i>推迟布局更新</div><div class="up">更新</div></div>`);
def('x-status',`:host{display:flex;height:6px;background:#f0f0f0;box-shadow:inset 0 1px #c6c6c6;overflow:hidden;flex:none;padding-left:7px;line-height:16px;color:#555;position:relative}
.t{margin-top:1px;width:1062px;flex:none}.v{width:38px;height:6px;background:#c6c6c6;flex:none}
.n{margin:2px 0 0 13px;width:13px;height:14px;border:1px solid #666;box-sizing:border-box;flex:none}
.p{margin:1px 0 0 12px}`,`<span class="t">就绪</span><div class="v"><div class="n"></div></div><div class="n" style="margin-left:12px"></div><div class="n" style="margin-left:25px"></div><span class="p" style="margin-left:160px">100%</span>`);
(function(){
 const items=[['recent','最近'],['folder','模板'],['col','柱形图'],['line','折线图',1],['pie','饼图'],['bar','条形图'],['area','面积图'],['scat','X Y (散点图)'],['stock','股价图'],['surf','曲面图'],['radar','雷达图'],['tree','树状图'],['sun','旭日图'],['hist','直方图'],['boxp','箱形图'],['water','瀑布图'],['combo','组合']];
 const list=items.map(i=>`<div class="it${i[2]?' on':''}"><div class="ib">${ic(i[0])}</div><span>${i[1]}</span></div>`).join('');
 const ty=['t1','t2','t3','t4','t5','t6','t7'].map((n,i)=>`<div class="ty${i?'':' sel'}">${ic(n)}</div>`).join('');
 const ylab=[600000,500000,400000,300000,200000,100000,0];
 const chart=`<svg xmlns="http://www.w3.org/2000/svg" width="217" height="130" viewBox="470 380 217 130" font-family="Noto Sans CJK SC" font-size="5" fill="#666" style="display:block">
 ${ylab.map((v,i)=>`<text x="504" y="${388+i*11}" text-anchor="end">${v}</text><path d="M508 ${386.500+i*11}h99" stroke="#e0e0e0" stroke-width="1.300"/>`).join('')}
 <polyline points="517,393 537,403 557,452 577,452 597,444" fill="none" stroke="#4472c4" stroke-width="1.300"/>
 <path d="M517 452.500h80" stroke="#c4845a" stroke-width="1"/>
 ${[['拌客干拌麻辣烫(武宁路店)',521,457],['宝山店',540,457],['龙阳广场店',559,457],['怒江路店',578,457],['五角场店',597,457]].map(l=>`<text x="${l[1]}" y="${l[2]}" text-anchor="end" transform="rotate(-45 ${l[1]} ${l[2]})">${l[0]}</text>`).join('')}
 <path d="M616 424.500h14" stroke="#4472c4"/><path d="M616 441.500h14" stroke="#ed7d31"/><path d="M616 458.500h14" stroke="#a5a5a5"/>
 <text x="630" y="426">GMV 总和</text><text x="630" y="443">求和项:单均实收</text><text x="630" y="460">求和项:cpc单次点击费</text><text x="630" y="467">用</text>
 </svg>`;
 def('x-dialog',`:host{position:absolute;left:319px;top:200px;width:632px;height:540px;background:#f0f0f0;box-shadow:0 0 10px rgba(0,0,0,.35);border-top:1px solid #9a9a9a;box-sizing:border-box;display:flex;flex-direction:column;color:#444}
.tt{height:30px;background:#fff;display:flex;align-items:center;padding:0 0 3px 8px;box-sizing:border-box;color:#a6a6a6;flex:none}
.tt .q{margin-left:auto;font-size:14px;color:#999;margin-right:36px}
.tt x-ico{margin-right:17px}
.tab{margin:9px 0 0 6px;width:64px;height:23px;background:#fff;border:1px solid #d4d4d4;border-bottom:0;box-sizing:border-box;text-align:center;line-height:22px;color:#222;position:relative;z-index:1;flex:none}
.pn{margin:-1px 8px 0 6px;flex:1;background:#fff;border:1px solid #d4d4d4;border-bottom:0;display:flex;min-height:0}
.ls{width:128px;padding-top:13px;flex:none}
.it{margin-left:14px;width:103px;height:24px;display:flex;align-items:center;white-space:nowrap}
.it.on{background:#c6c6c6}
.ib{width:30px;box-sizing:border-box;padding-left:2px;display:flex;align-items:center;flex:none}
.vr{width:1px;background:#c6c6c6;margin-top:17px;flex:none}
.r{padding:15px 0 0 11px;flex:1}
.tys{display:flex}
.ty{width:56px;height:56px;box-sizing:border-box;padding:9px 0 0 8px}
.sel{background:#c6c6c6}
.hr{height:1px;background:#c6c6c6;margin-top:6px;width:464px}
h3{margin:0;font-weight:400;font-size:16.600px;line-height:37px;height:35px;color:#222}
.pv{width:225px;height:138px;border:4px solid #c6c6c6;box-sizing:border-box;background:#fff}`,
 `<div class="tt"><span>插入图表</span><span class="q">?</span><x-ico n="wxd"></x-ico></div><div class="tab">所有图表</div><div class="pn"><div class="ls">${list}</div><div class="vr"></div><div class="r"><div class="tys">${ty}</div><div class="hr"></div><h3>折线图</h3><div class="pv">${chart}</div></div></div>`);
})();
def('x-marks',':host{position:absolute;left:0;top:0;width:1366px;height:713px;pointer-events:none}svg{display:block}',
`<svg xmlns="http://www.w3.org/2000/svg" width="1366" height="713" viewBox="0 0 1366 713">
<g fill="none" stroke="#f93535" stroke-width="3"><rect x="536.500" y="35.500" width="51" height="26"/><rect x="1064.500" y="100.500" width="46" height="34"/><rect x="338.500" y="350.500" width="99" height="23"/></g>
<polygon fill="#fb3a3a" points="591,55 1043,114 1043,112 1061,122 1042,127 1042,120"/>
<polygon fill="#fb3a3a" points="1069,138 417,339 416,335 403,347 420.600,349 419,345"/>
</svg>`);
def('x-meter',`:host{position:absolute;left:1356px;top:661px;width:10px;height:52px;background:#3c4450;border-radius:3px 0 0 0;box-sizing:border-box;padding:14px 2px 0 4px}
div{height:38px;background:repeating-linear-gradient(transparent 0 2px,#3c4450 2px 3px),linear-gradient(#d8a23a,#7cc04c 60%,#5fb34a)}`,'<div></div>');
def('x-watermark',`:host{position:absolute;left:1020px;top:680px;font:20px/24px "Liberation Sans","Noto Sans CJK SC",sans-serif;letter-spacing:-.6px;color:#808080;white-space:nowrap;text-shadow:0 0 2px #fff,0 0 2px #fff}`,'<slot></slot>');
</script>
</body></html>
